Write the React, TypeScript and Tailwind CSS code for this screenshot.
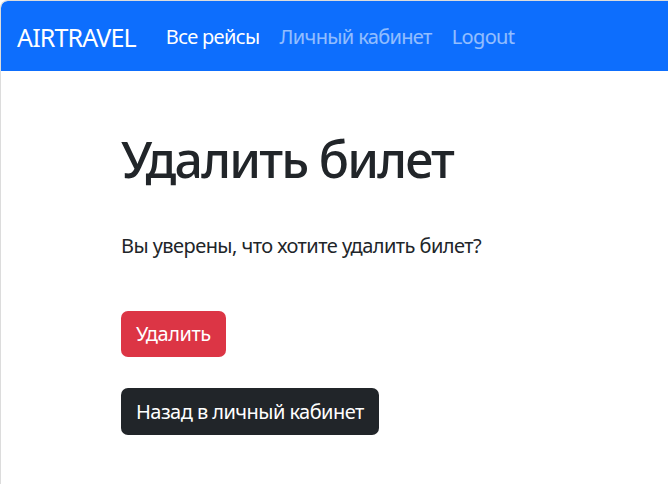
import React from 'react'

export default function App (): React.JSX.Element {
  return (
    <div className="w-[668px] h-[484px] overflow-hidden bg-white border-l border-t border-[#dcdcdc] rounded-tl-lg font-['Noto_Sans',sans-serif] text-[#212529]">
      <nav className="h-[70px] bg-[#0d6efd] flex items-center pl-4 pt-[2px] rounded-tl-md">
        <a className="text-[25px] tracking-[-0.85px] text-white mr-[30px] leading-none">AIRTRAVEL</a>
        <div className="flex items-center gap-5 text-[20px] tracking-[-0.65px] leading-none">
          <a className="text-white">Все рейсы</a>
          <a className="text-white/55">Личный кабинет</a>
          <a className="text-white/55">Logout</a>
        </div>
      </nav>
      <main className="pl-[120px] pt-[58px]">
        <h1 className="text-[50px] tracking-[-1.8px] font-medium leading-[60px]">Удалить билет</h1>
        <p className="text-[20px] tracking-[-0.55px] mt-[42px] leading-normal">Вы уверены, что хотите удалить билет?</p>
        <div className="mt-[50px] flex flex-col items-start gap-[31px]">
          <button className="bg-[#dc3545] text-white text-[20px] tracking-[-0.45px] px-[15px] h-[46px] rounded-[7px]">Удалить</button>
          <button className="bg-[#212529] text-white text-[20px] tracking-[-0.55px] px-[15px] h-[47px] rounded-[7px]">Назад в личный кабинет</button>
        </div>
      </main>
    </div>
  )
}
